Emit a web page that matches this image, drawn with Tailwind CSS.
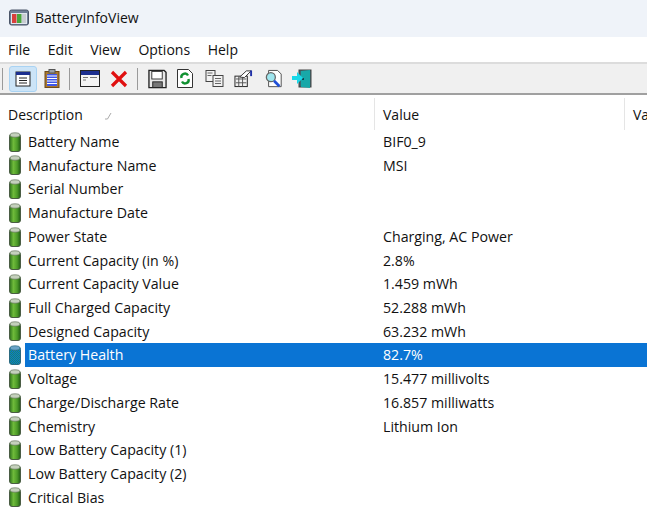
<!DOCTYPE html>
<html lang="en">
<head>
  <meta charset="UTF-8" />
  <title>BatteryInfoView</title>
  <script src="https://cdn.jsdelivr.net/npm/@tailwindcss/browser@4"></script>
</head>
<body class="w-[647px] h-[513px] overflow-hidden bg-white text-[14px] text-[#111] font-['Open_Sans','Noto_Sans',sans-serif]">

  <svg width="0" height="0" class="absolute">
    <defs>
      <linearGradient id="green" x1="0" x2="1" y1="0" y2="0">
        <stop offset="0" stop-color="#2a6e1c" />
        <stop offset="0.35" stop-color="#6fbb3a" />
        <stop offset="0.7" stop-color="#4c9a28" />
        <stop offset="1" stop-color="#1f5a14" />
      </linearGradient>
      <pattern id="dither" width="2" height="2" patternUnits="userSpaceOnUse">
        <rect width="2" height="2" fill="#1a8a6c" />
        <rect width="1" height="1" fill="#0a74d4" />
        <rect x="1" y="1" width="1" height="1" fill="#0a74d4" />
      </pattern>
      <symbol id="battery" viewBox="0 0 14 20">
        <rect x="1.500" y="2" width="11" height="17.500" rx="2.500" fill="url(#green)" stroke="#4a5c44" />
        <ellipse cx="7" cy="3" rx="5" ry="2.200" fill="#c4d0bc" stroke="#66755f" stroke-width="0.700" />
      </symbol>
      <symbol id="battery-selected" viewBox="0 0 14 20">
        <rect x="1.500" y="2" width="11" height="17.500" rx="2.500" fill="url(#dither)" stroke="#2c6a80" />
        <ellipse cx="7" cy="3" rx="5" ry="2.200" fill="#6aa4c8" stroke="#2c6a80" stroke-width="0.700" />
      </symbol>
    </defs>
  </svg>

  <!-- title bar -->
  <div class="h-[37px] bg-[#eff3f9] flex items-center pl-[9px] gap-[6px] pb-[2px]">
    <svg width="20" height="17" viewBox="0 0 20 17">
      <rect x="0.500" y="1" width="19" height="15" rx="2" fill="#6f7f96" stroke="#4b5568" />
      <rect x="2" y="4" width="16" height="11" fill="#dfe6ee" />
      <rect x="3" y="5" width="4.500" height="9" fill="#d8403c" />
      <rect x="8" y="5" width="4.500" height="9" fill="#4aa63c" />
      <rect x="13" y="5" width="4" height="9" fill="#c8ccd2" />
    </svg>
    <span>BatteryInfoView</span>
  </div>

  <!-- menu -->
  <div class="h-[25px] flex items-center pl-[8px] gap-[17.6px] pb-[1px]">
    <span>File</span>
    <span>Edit</span>
    <span>View</span>
    <span>Options</span>
    <span>Help</span>
  </div>

  <!-- toolbar -->
  <div class="h-[33px] bg-[#f0f0f0] border-t-2 border-b-2 border-t-[#dcdcdc] border-b-[#a0a0a0] flex items-center pl-[2px]">
    <div class="w-[1px] h-[22px] bg-[#9a9a9a]"></div>
    <div class="ml-[6px] w-[28px] h-[26px] shrink-0 rounded-[3px] bg-[#cce4f7] border border-[#a9d3f3] flex items-center justify-center">
      <svg width="16" height="16" viewBox="0 0 16 16">
        <rect x="1" y="1" width="14" height="14" fill="#fff" stroke="#222" />
        <rect x="1" y="1" width="14" height="3" fill="#1c2f8f" />
        <path d="M4 7h8M4 9.500h8M4 12h8" stroke="#222" />
      </svg>
    </div>
    <svg class="ml-[7px]" width="16" height="19" viewBox="0 0 16 19">
      <rect x="1" y="2.500" width="14" height="16" fill="#a9782e" stroke="#6d4a1c" />
      <rect x="3" y="5" width="10" height="12" fill="#3f56e8" />
      <path d="M3 7h10M3 9.500h10M3 12h10M3 14.500h10" stroke="#fff" />
      <rect x="5" y="0.500" width="6" height="3.500" fill="#9aa0a8" stroke="#555" />
    </svg>
    <div class="ml-[9px] w-[1px] h-[22px] bg-[#9a9a9a]"></div>
    <svg class="ml-[10px]" width="20" height="17" viewBox="0 0 20 17">
      <rect x="0.500" y="0.500" width="19" height="16" fill="#f4f4f4" stroke="#222" />
      <rect x="1" y="1" width="18" height="4" fill="#1c2f8f" />
      <path d="M3 7.500h5M10 7.500h7M3 10h3" stroke="#777" />
    </svg>
    <svg class="ml-[10px]" width="18" height="18" viewBox="0 0 18 18">
      <path d="M2 2 L16 16 M16 2 L2 16" stroke="#e01010" stroke-width="3.200" />
    </svg>
    <div class="ml-[9px] w-[1px] h-[22px] bg-[#9a9a9a]"></div>
    <svg class="ml-[10px]" width="19" height="20" viewBox="0 0 20 20">
      <path d="M1 1h16l2 2v16H1z" fill="#e8e8e8" stroke="#222" stroke-width="1.400" />
      <rect x="4" y="2" width="11" height="8" fill="#fff" stroke="#333" />
      <rect x="5" y="13" width="10" height="6" fill="#777" stroke="#222" />
    </svg>
    <svg class="ml-[10px]" width="16" height="19" viewBox="0 0 16 19">
      <path d="M0.500 0.500h11l4 4v14h-15z" fill="#fff" stroke="#333" />
      <path d="M4.500 9a3.500 3.500 0 0 1 6.500-2.500" fill="none" stroke="#109030" stroke-width="2.400" />
      <path d="M11.500 10a3.500 3.500 0 0 1-6.500 2.500" fill="none" stroke="#109030" stroke-width="2.400" />
    </svg>
    <svg class="ml-[12px]" width="19" height="17" viewBox="0 0 18 17">
      <rect x="0.500" y="0.500" width="9" height="11" fill="#f2f2f2" stroke="#444" />
      <rect x="7.500" y="5.500" width="10" height="11" fill="#f2f2f2" stroke="#444" />
      <path d="M2 3h5M2 5.500h4M9.500 8.500h6M9.500 11h6M9.500 13.500h6" stroke="#666" />
    </svg>
    <svg class="ml-[10px]" width="19" height="19" viewBox="0 0 20 19">
      <rect x="1" y="7" width="13" height="11" fill="#f0f0f0" stroke="#222" />
      <path d="M2 10h11M5 7v11M9 7v11M2 14h11" stroke="#555" />
      <path d="M6 8 L13 1.500 h5 l-7 7z" fill="#fff" stroke="#333" />
      <rect x="17" y="1" width="2" height="6" fill="#2030a8" />
    </svg>
    <svg class="ml-[12px]" width="18" height="20" viewBox="0 0 20 20">
      <path d="M4 0.500h10l4 4v14H4z" fill="#fff" stroke="#444" />
      <circle cx="6.500" cy="8" r="5" fill="#9fe6ee" stroke="#666" stroke-width="1.400" />
      <path d="M10 12l6 6" stroke="#1f50d8" stroke-width="3" />
    </svg>
    <svg class="ml-[9px]" width="20" height="20" viewBox="0 0 20 20">
      <rect x="7" y="1" width="12" height="17" fill="#3a6a70" stroke="#444" />
      <path d="M9 2l9-1v18l-9-1z" fill="#18a8a8" />
      <circle cx="11" cy="10" r="1" fill="#123" />
      <path d="M0 7h5V3l6 6-6 6v-4H0z" fill="#19d8e8" />
    </svg>
  </div>

  <!-- column header -->
  <div class="h-[34.8px] pt-[3px] flex items-center">
    <div class="w-[375px] shrink-0 h-full border-r border-[#e5e5e5] pl-[8px] pt-[1px] flex items-center">
      <span>Description</span>
      <svg class="ml-[21px] mt-[3px]" width="8" height="8" viewBox="0 0 8 8">
        <path d="M1 7h2.500L7 1" fill="none" stroke="#aaa" />
      </svg>
    </div>
    <div class="w-[250px] shrink-0 h-full border-r border-[#e5e5e5] pl-[8px] pt-[1px] flex items-center">Value</div>
    <div class="pl-[8px] pt-[1px]">Value</div>
  </div>

  <!-- rows -->
  <div class="grid grid-cols-[375px_1fr] auto-rows-[23.73px] items-center text-[14.2px]">
    <div class="flex items-center gap-[6px] pl-[8px]"><svg width="14" height="20"><use href="#battery" /></svg>Battery Name</div>
    <div class="pl-[8px]">BIF0_9</div>
    <div class="flex items-center gap-[6px] pl-[8px]"><svg width="14" height="20"><use href="#battery" /></svg>Manufacture Name</div>
    <div class="pl-[8px]">MSI</div>
    <div class="flex items-center gap-[6px] pl-[8px]"><svg width="14" height="20"><use href="#battery" /></svg>Serial Number</div>
    <div class="pl-[8px]"></div>
    <div class="flex items-center gap-[6px] pl-[8px]"><svg width="14" height="20"><use href="#battery" /></svg>Manufacture Date</div>
    <div class="pl-[8px]"></div>
    <div class="flex items-center gap-[6px] pl-[8px]"><svg width="14" height="20"><use href="#battery" /></svg>Power State</div>
    <div class="pl-[8px]">Charging, AC Power</div>
    <div class="flex items-center gap-[6px] pl-[8px]"><svg width="14" height="20"><use href="#battery" /></svg>Current Capacity (in %)</div>
    <div class="pl-[8px]">2.8%</div>
    <div class="flex items-center gap-[6px] pl-[8px]"><svg width="14" height="20"><use href="#battery" /></svg>Current Capacity Value</div>
    <div class="pl-[8px]">1.459 mWh</div>
    <div class="flex items-center gap-[6px] pl-[8px]"><svg width="14" height="20"><use href="#battery" /></svg>Full Charged Capacity</div>
    <div class="pl-[8px]">52.288 mWh</div>
    <div class="flex items-center gap-[6px] pl-[8px]"><svg width="14" height="20"><use href="#battery" /></svg>Designed Capacity</div>
    <div class="pl-[8px]">63.232 mWh</div>
    <!-- selected row -->
    <div class="flex items-center h-full pl-[8px]">
      <svg width="14" height="20"><use href="#battery-selected" /></svg>
      <div class="ml-[3px] pl-[3px] flex-1 h-full flex items-center bg-[#0a74d4] text-white">Battery Health</div>
    </div>
    <div class="pl-[8px] h-full flex items-center bg-[#0a74d4] text-white">82.7%</div>
    <div class="flex items-center gap-[6px] pl-[8px]"><svg width="14" height="20"><use href="#battery" /></svg>Voltage</div>
    <div class="pl-[8px]">15.477 millivolts</div>
    <div class="flex items-center gap-[6px] pl-[8px]"><svg width="14" height="20"><use href="#battery" /></svg>Charge/Discharge Rate</div>
    <div class="pl-[8px]">16.857 milliwatts</div>
    <div class="flex items-center gap-[6px] pl-[8px]"><svg width="14" height="20"><use href="#battery" /></svg>Chemistry</div>
    <div class="pl-[8px]">Lithium Ion</div>
    <div class="flex items-center gap-[6px] pl-[8px]"><svg width="14" height="20"><use href="#battery" /></svg>Low Battery Capacity (1)</div>
    <div class="pl-[8px]"></div>
    <div class="flex items-center gap-[6px] pl-[8px]"><svg width="14" height="20"><use href="#battery" /></svg>Low Battery Capacity (2)</div>
    <div class="pl-[8px]"></div>
    <div class="flex items-center gap-[6px] pl-[8px]"><svg width="14" height="20"><use href="#battery" /></svg>Critical Bias</div>
    <div class="pl-[8px]"></div>
  </div>

</body>
</html>
